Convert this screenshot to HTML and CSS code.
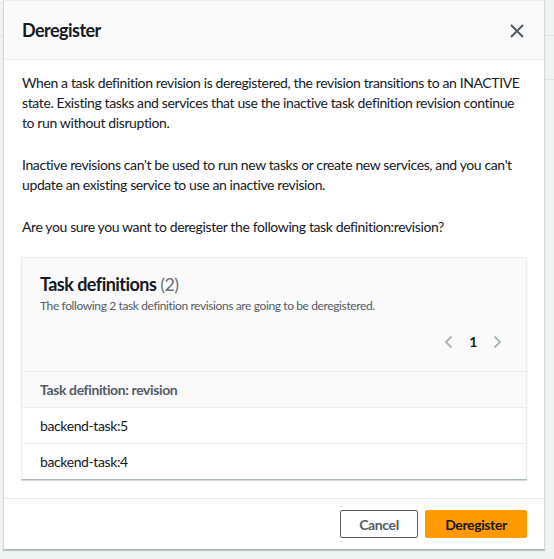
FILE: index.html
```html
<!DOCTYPE html>
<html>
<head>
<meta charset="utf-8">
<link rel="stylesheet" href="styles.css">
</head>
<body>
<div class="backdrop">
  <div class="bg-line bg-line-1"></div>
  <div class="bg-line bg-line-2"></div>
  <div class="modal">
    <div class="modal-header">
      <h2 class="modal-title">Deregister</h2>
      <button class="close-btn" aria-label="Close">
        <svg width="16" height="16" viewBox="0 0 16 16"><path d="M2 2 L14 14 M14 2 L2 14" stroke="#545b64" stroke-width="2" fill="none"/></svg>
      </button>
    </div>
    <div class="modal-body">
      <p>When a task definition revision is deregistered, the revision transitions to an INACTIVE state. Existing tasks and services that use the inactive task definition revision continue to run without disruption.</p>
      <p>Inactive revisions can't be used to run new tasks or create new services, and you can't update an existing service to use an inactive revision.</p>
      <p>Are you sure you want to deregister the following task definition:revision?</p>
      <div class="card">
        <div class="card-header">
          <h3 class="card-title">Task definitions <span class="count">(2)</span></h3>
          <div class="card-desc">The following 2 task definition revisions are going to be deregistered.</div>
          <div class="pagination">
            <svg class="chev" width="16" height="16" viewBox="0 0 16 16"><path d="M10.5 2.5 L5 8 L10.5 13.5" stroke="#aab7b8" stroke-width="2" fill="none"/></svg>
            <span class="page">1</span>
            <svg class="chev" width="16" height="16" viewBox="0 0 16 16"><path d="M5.5 2.5 L11 8 L5.5 13.5" stroke="#aab7b8" stroke-width="2" fill="none"/></svg>
          </div>
        </div>
        <div class="table">
          <div class="th">Task definition: revision</div>
          <div class="td">backend-task:5</div>
          <div class="td">backend-task:4</div>
        </div>
      </div>
    </div>
    <div class="modal-footer">
      <button class="btn btn-normal">Cancel</button>
      <button class="btn btn-primary">Deregister</button>
    </div>
  </div>
</div>
</body>
</html>
```

FILE: styles.css
```css
html, body {
  margin: 0;
  padding: 0;
}
body {
  background: #f2f3f3;
  font-family: Lato, "Liberation Sans", sans-serif;
  letter-spacing: -0.024em;
  color: #16191f;
  width: 554px;
  height: 559px;
  overflow: hidden;
}
.backdrop {
  position: relative;
  height: 559px;
  padding-left: 3px;
}
.bg-line {
  position: absolute;
  height: 1px;
  background: #dfe4e4;
  left: 0;
  right: 0;
}
.bg-line-1 { top: 35px; }
.bg-line-2 { top: 79px; left: 544px; }
.modal {
  position: relative;
  width: 540px;
  border: 1px solid #d5dbdb;
  border-top-color: #eaeded;
  border-bottom-color: #aab7b8;
  background: #fff;
  box-shadow: 0 1px 1px rgba(0,28,36,0.2);
}
.modal-header {
  height: 58px;
  background: #fafafa;
  border-bottom: 1px solid #eaeded;
  display: flex;
  align-items: center;
  justify-content: space-between;
  padding: 0 17px 0 18px;
}
.modal-title {
  margin: 0;
  font-size: 18px;
  font-weight: 700;
  letter-spacing: -0.03em;
  color: #16191f;
}
.close-btn {
  border: 0;
  background: none;
  padding: 0;
  width: 20px;
  height: 20px;
  display: flex;
  align-items: center;
  justify-content: center;
  margin-top: 1px;
}
.modal-body {
  padding: 13px 17px 18px 17px;
  font-size: 14px;
  line-height: 20px;
}
.modal-body p {
  margin: 0 0 22px 1px;
}
.modal-body p:nth-of-type(3) {
  margin-bottom: 20px;
}
.card {
  border: 1px solid #eaeded;
  border-bottom-color: #aab7b8;
  box-shadow: 0 1px 1px rgba(0,28,36,0.15);
  background: #fff;
}
.card-header {
  background: #fafafa;
  padding: 14px 18px 0 18px;
  border-bottom: 1px solid #eaeded;
  height: 114px;
  box-sizing: border-box;
}
.card-title {
  margin: 0;
  font-size: 18px;
  font-weight: 700;
  line-height: 24px;
  letter-spacing: -0.03em;
}
.count {
  font-weight: 400;
  color: #687078;
}
.card-desc {
  font-size: 12px;
  line-height: 16px;
  color: #545b64;
  margin-top: 2px;
}
.pagination {
  display: flex;
  justify-content: flex-end;
  align-items: center;
  gap: 12px;
  margin-top: 18px;
  padding-right: 3px;
}
.page {
  font-size: 14px;
  font-weight: 700;
  color: #16191f;
}
.th {
  background: #fafafa;
  font-weight: 700;
  color: #545b64;
  padding: 0 18px;
  height: 35px;
  line-height: 35px;
  border-bottom: 1px solid #eaeded;
  font-size: 14px;
}
.td {
  padding: 0 18px;
  height: 35px;
  line-height: 35px;
  border-bottom: 1px solid #eaeded;
  font-size: 14px;
}
.td:last-child {
  border-bottom: 0;
}
.modal-footer {
  border-top: 1px solid #eaeded;
  padding: 11px 17px 11px 17px;
  display: flex;
  justify-content: flex-end;
  gap: 7px;
}
.btn {
  font-family: inherit;
  letter-spacing: inherit;
  font-size: 14px;
  font-weight: 700;
  height: 28px;
  border-radius: 2px;
  cursor: pointer;
}
.btn-normal {
  width: 78px;
  background: #fff;
  border: 1px solid #545b64;
  color: #545b64;
}
.btn-primary {
  width: 102px;
  background: #ff9900;
  border: 1px solid #ff9900;
  color: #16191f;
}
```
